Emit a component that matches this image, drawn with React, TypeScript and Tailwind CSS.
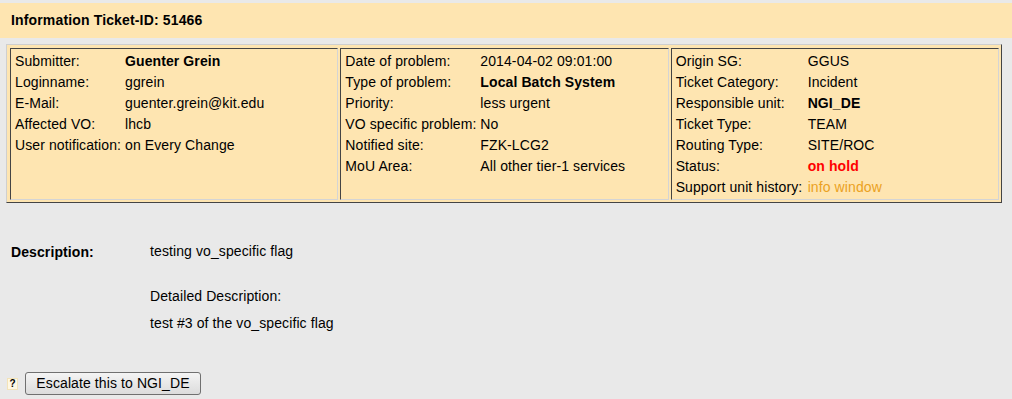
import React from "react";

const font = { fontFamily: '"Liberation Sans", Arial, sans-serif' };

type Row = { l: string; v: React.ReactNode; bold?: boolean };

function Col({ rows, labelW }: { rows: Row[]; labelW: string }) {
  return (
    <div className="flex-1 border border-t-[#444] border-l-[#444] border-b-[#d4d4d4] border-r-[#d4d4d4] pl-[4px] pt-[2px]">
      {rows.map((r, i) => (
        <div key={i} className="flex h-[21px] items-center whitespace-nowrap">
          <div className={labelW}>{r.l}</div>
          <div className={r.bold ? "font-bold" : ""}>{r.v}</div>
        </div>
      ))}
    </div>
  );
}

export default function App() {
  return (
    <div className="min-h-[399px] w-[1012px] bg-[#e9e9e9] pt-[3px] text-[14px] tracking-[0.1px] text-black" style={font}>
      <div className="flex h-[35px] items-center bg-[#fee5b1] pl-[11px] text-[14px] font-bold tracking-[0.15px]">
        Information Ticket-ID: 51466
      </div>
      <div className="ml-[6px] mt-[6px] w-[996px] border border-t-[#cfcfcf] border-l-[#cfcfcf] border-b-[#444] border-r-[#444] bg-[#fee5b1] pt-[3px] pl-[3px] pr-[2px] pb-[2px]">
        <div className="flex h-[152px] gap-[2px]">
          <Col
            labelW="w-[110px]"
            rows={[
              { l: "Submitter:", v: "Guenter Grein", bold: true },
              { l: "Loginname:", v: "ggrein" },
              { l: "E-Mail:", v: "guenter.grein@kit.edu" },
              { l: "Affected VO:", v: "lhcb" },
              { l: "User notification:", v: "on Every Change" },
            ]}
          />
          <Col
            labelW="w-[135px]"
            rows={[
              { l: "Date of problem:", v: "2014-04-02 09:01:00" },
              { l: "Type of problem:", v: "Local Batch System", bold: true },
              { l: "Priority:", v: "less urgent" },
              { l: "VO specific problem:", v: "No" },
              { l: "Notified site:", v: "FZK-LCG2" },
              { l: "MoU Area:", v: "All other tier-1 services" },
            ]}
          />
          <Col
            labelW="w-[132px]"
            rows={[
              { l: "Origin SG:", v: "GGUS" },
              { l: "Ticket Category:", v: "Incident" },
              { l: "Responsible unit:", v: "NGI_DE", bold: true },
              { l: "Ticket Type:", v: "TEAM" },
              { l: "Routing Type:", v: "SITE/ROC" },
              { l: "Status:", v: <span className="text-[#ff0000]">on hold</span>, bold: true },
              { l: "Support unit history:", v: <span className="text-[#eba122]">info window</span> },
            ]}
          />
        </div>
      </div>

      <div className="mt-[39px] flex pl-[11px]">
        <div className="w-[139px] font-bold">Description:</div>
        <div className="flex flex-col">
          <div className="h-[18px] leading-[18px]">testing vo_specific flag</div>
          <div className="mt-[27px] h-[18px] leading-[18px]">Detailed Description:</div>
          <div className="mt-[9px] h-[18px] leading-[18px]">test #3 of the vo_specific flag</div>
        </div>
      </div>

      <div className="mt-[40px] flex items-center pl-[7px]">
        <span className="flex h-[12px] w-[11px] items-center justify-center border border-[#f3e3b8] bg-[#fff8e4] text-[10px] font-bold leading-none">?</span>
        <button
          className="ml-[7px] h-[23px] w-[176px] rounded-[3px] border border-[#707070] bg-gradient-to-b from-[#f4f4f4] to-[#dcdcdc] text-[14px] tracking-[0.1px] text-black"
          style={font}
        >
          Escalate this to NGI_DE
        </button>
      </div>
    </div>
  );
}
